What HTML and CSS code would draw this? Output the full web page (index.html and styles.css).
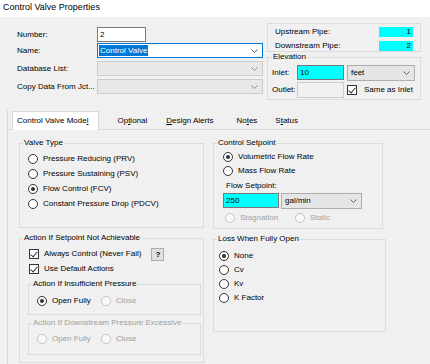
FILE: index.html
```html
<!DOCTYPE html>
<html>
<head>
<meta charset="utf-8">
<link rel="stylesheet" href="styles.css">
</head>
<body>
<div class="titlebar">Control Valve Properties</div>
<div class="top">
  <div class="form">
    <div class="frow r1"><span class="lbl">Number:</span><div class="tb num">2</div></div>
    <div class="frow r2"><span class="lbl">Name:</span><div class="combo name"><span class="sel">Control Valve</span><svg class="chev" width="7" height="4" viewBox="0 0 7 4"><path d="M0.5 0.5L3.5 3.5L6.5 0.5" fill="none" stroke="#606060"/></svg></div></div>
    <div class="frow r3"><span class="lbl">Database List:</span><div class="combo dis"><span></span><svg class="chev" width="7" height="4" viewBox="0 0 7 4"><path d="M0.5 0.5L3.5 3.5L6.5 0.5" fill="none" stroke="#8a8a8a"/></svg></div></div>
    <div class="frow r3"><span class="lbl">Copy Data From Jct...</span><div class="combo dis"><span></span><svg class="chev" width="7" height="4" viewBox="0 0 7 4"><path d="M0.5 0.5L3.5 3.5L6.5 0.5" fill="none" stroke="#8a8a8a"/></svg></div></div>
  </div>
  <div class="right">
    <div class="pipes">
      <div class="prow"><span>Upstream Pipe:</span><span class="cyv">1</span></div>
      <div class="prow"><span>Downstream Pipe:</span><span class="cyv">2</span></div>
    </div>
    <fieldset class="g elev">
      <legend>Elevation</legend>
      <div class="erow e1"><span class="elbl">Inlet:</span><div class="tb cyan inlet">10</div><div class="combo dd feet"><span>feet</span><svg class="chev" width="7" height="4" viewBox="0 0 7 4"><path d="M0.5 0.5L3.5 3.5L6.5 0.5" fill="none" stroke="#606060"/></svg></div></div>
      <div class="erow e2"><span class="elbl">Outlet:</span><div class="tb distb outlet"></div><span class="cb on"></span><span class="cbl">Same as Inlet</span></div>
    </fieldset>
  </div>
</div>
<div class="tabs">
  <div class="strip">
    <div class="tab act">Control Valve Mode<u>l</u></div>
    <div class="tab t2">Op<u>t</u>ional</div>
    <div class="tab t3"><u>D</u>esign Alerts</div>
    <div class="tab t4">No<u>t</u>es</div>
    <div class="tab t5">S<u>t</u>atus</div>
  </div>
  <div class="panel">
    <div class="col left">
      <fieldset class="g vt">
        <legend>Valve Type</legend>
        <div class="gb vtb">
          <div class="opt"><span class="rb"></span>Pressure Reducing (PRV)</div>
          <div class="opt"><span class="rb"></span>Pressure Sustaining (PSV)</div>
          <div class="opt"><span class="rb on"></span>Flow Control (FCV)</div>
          <div class="opt"><span class="rb"></span>Constant Pressure Drop (PDCV)</div>
        </div>
      </fieldset>
      <fieldset class="g act2">
        <legend>Action If Setpoint Not Achievable</legend>
        <div class="gb actb">
          <div class="opt"><span class="cb on"></span>Always Control (Never Fail)<span class="qbtn">?</span></div>
          <div class="opt"><span class="cb on"></span>Use Default Actions</div>
          <fieldset class="g sub s1">
            <legend>Action If Insufficient Pressure</legend>
            <div class="gb subb">
              <div class="opt"><span class="pair"><span class="rb on"></span>Open Fully</span><span class="pair off"><span class="rb"></span>Close</span></div>
            </div>
          </fieldset>
          <fieldset class="g sub s2">
            <legend class="off">Action If Downstream Pressure Excessive</legend>
            <div class="gb subb">
              <div class="opt"><span class="pair off"><span class="rb"></span>Open Fully</span><span class="pair off"><span class="rb"></span>Close</span></div>
            </div>
          </fieldset>
        </div>
      </fieldset>
    </div>
    <div class="col rightc">
      <fieldset class="g cs">
        <legend>Control Setpoint</legend>
        <div class="gb csb">
          <div class="opt"><span class="rb on"></span>Volumetric Flow Rate</div>
          <div class="opt"><span class="rb"></span>Mass Flow Rate</div>
          <div class="fsl">Flow Setpoint:</div>
          <div class="fsrow"><div class="tb cyan fs">250</div><div class="combo dd gal"><span>gal/min</span><svg class="chev" width="7" height="4" viewBox="0 0 7 4"><path d="M0.5 0.5L3.5 3.5L6.5 0.5" fill="none" stroke="#606060"/></svg></div></div>
          <div class="opt stag"><span class="pair off w1"><span class="rb"></span>Stagnation</span><span class="pair off"><span class="rb"></span>Static</span></div>
        </div>
      </fieldset>
      <fieldset class="g loss">
        <legend>Loss When Fully Open</legend>
        <div class="gb lossb">
          <div class="opt"><span class="rb on"></span>None</div>
          <div class="opt"><span class="rb"></span>Cv</div>
          <div class="opt"><span class="rb"></span>Kv</div>
          <div class="opt"><span class="rb"></span>K Factor</div>
        </div>
      </fieldset>
    </div>
  </div>
</div>
</body>
</html>
```
FILE: styles.css
```css
html, body {
  margin: 0;
  padding: 0;
}
body {
  width: 430px;
  height: 364px;
  overflow: hidden;
  background: #f0f0f0;
  color: #000;
  font-family: "Liberation Sans", Arial, sans-serif;
  font-size: 8px;
  line-height: 10px;
}
.titlebar {
  height: 17px;
  background: #fff;
  padding-left: 3px;
  font-size: 9px;
  line-height: 14px;
  box-sizing: border-box;
}
.top {
  display: flex;
  height: 93px;
}
.form {
  padding: 10px 0 0 17px;
}
.frow {
  display: flex;
  align-items: center;
  height: 15px;
}
.frow.r2 { margin-top: 1px; }
.frow.r3 { margin-top: 3px; }
.lbl {
  width: 80px;
  white-space: nowrap;
}
.tb {
  box-sizing: border-box;
  height: 15px;
  border: 1px solid #7a7a7a;
  background: #fff;
  padding-left: 2px;
  line-height: 13px;
}
.num { width: 49px; }
.combo {
  box-sizing: border-box;
  width: 166px;
  height: 15px;
  display: flex;
  align-items: center;
  justify-content: space-between;
  border: 1px solid #cccccc;
  background: #e8e8e8;
  padding: 0 4px 0 1px;
}
.combo .chev { flex: none; }
.combo.name {
  border-color: #0078d7;
  background: #fff;
}
.sel {
  background: #0078d7;
  color: #fff;
  line-height: 11px;
  padding: 0 1px;
}
.combo.dd {
  background: #e5e5e5;
  border-color: #adadad;
  padding-left: 3px;
}
.right {
  margin-left: 4px;
  padding-top: 6px;
  width: 154px;
}
.pipes {
  box-sizing: border-box;
  height: 29px;
  border: 1px solid #dcdcdc;
  padding: 3px 7px 0 7px;
}
.prow {
  display: flex;
  justify-content: space-between;
  align-items: center;
  height: 10px;
  margin-bottom: 4px;
}
.cyv {
  width: 34px;
  height: 10px;
  background: #00ffff;
  text-align: right;
  padding-right: 2px;
  box-sizing: border-box;
  line-height: 10px;
}
fieldset.g {
  border: 1px solid #dcdcdc;
  margin: 0;
  padding: 0;
  min-width: 0;
  box-sizing: border-box;
}
fieldset.g > legend {
  padding: 0 1px;
  line-height: 10px;
  margin-left: 3px;
}
.elev {
  margin-top: 4px;
  height: 48px;
  padding: 0 0 0 4px !important;
}
.elev > legend { margin-left: 0 !important; }
.erow {
  display: flex;
  align-items: center;
}
.e1 { margin-top: 3px; height: 15px; }
.e2 { margin-top: 2px; height: 16px; }
.elbl { width: 25px; }
.inlet { width: 47px; }
.cyan { background: #00ffff; }
.feet { width: 68px; height: 16px; margin-left: 3px; }
.distb {
  background: #f0f0f0;
  border-color: #cccccc;
}
.outlet { width: 47px; height: 16px; }
.cb {
  flex: none;
  box-sizing: border-box;
  width: 10px;
  height: 10px;
  border: 1px solid #333;
  background: #fff;
  position: relative;
}
.cb.on::after {
  content: "";
  position: absolute;
  left: 2px;
  top: 0px;
  width: 3px;
  height: 6px;
  border: solid #333;
  border-width: 0 1px 1px 0;
  transform: rotate(40deg);
}
.e2 .cb { margin-left: 3px; }
.cbl { margin-left: 2px; }

.tabs {
  margin-left: 7px;
  border-left: 1px solid #d9d9d9;
}
.strip {
  display: flex;
  align-items: flex-end;
  height: 19px;
  padding-left: 4px;
}
.tab {
  height: 15px;
  line-height: 14px;
  white-space: nowrap;
}
.tab.act {
  height: 18px;
  line-height: 17px;
  background: #fff;
  border: 1px solid #d9d9d9;
  border-bottom: none;
  padding: 0 10px 0 4px;
  margin-bottom: -1px;
  position: relative;
  z-index: 1;
}
.t2 { margin-left: 18px; }
.t3 { margin-left: 19px; }
.t4 { margin-left: 23px; }
.t5 { margin-left: 18px; }
.panel {
  border-top: 1px solid #d9d9d9;
  height: 240px;
  padding: 8px 0 0 11px;
  display: flex;
  gap: 9px;
}
.col {
  display: flex;
  flex-direction: column;
  gap: 5px;
}
.left { width: 185px; }
.rightc { width: 173px; }
.vt { height: 90px; }
.vt > legend { margin-left: 4px; }
.gb { display: flex; flex-direction: column; }
.opt {
  display: flex;
  align-items: center;
  height: 14px;
  white-space: nowrap;
}
.rb {
  flex: none;
  box-sizing: border-box;
  width: 10px;
  height: 10px;
  border: 1px solid #333;
  border-radius: 50%;
  background: #fff;
  margin-right: 5px;
  position: relative;
}
.rb.on::after {
  content: "";
  position: absolute;
  left: 2px;
  top: 2px;
  width: 4px;
  height: 4px;
  border-radius: 50%;
  background: #333;
}
.cb { margin-right: 5px; }
.vtb { padding: 4px 0 0 8px; gap: 1px; }
.off { color: #a0a0a0; }
.off .rb { border-color: #c4c4c4; background: #fafafa; }
.pair { display: flex; align-items: center; }
.act2 { height: 130px; }
.act2 > legend { margin-left: 5px; }
.actb { padding: 4px 0 0 9px; gap: 1px; }
.qbtn {
  box-sizing: border-box;
  width: 13px;
  height: 13px;
  margin-left: 10px;
  border: 1px solid #adadad;
  background: #e1e1e1;
  font-weight: bold;
  text-align: center;
  line-height: 11px;
}
.sub {
  width: 173px;
  margin-left: -1px !important;
}
.sub > legend { margin-left: 4px; }
.s1 { margin-top: 2px !important; height: 36px; }
.s2 { margin-top: 2px !important; height: 37px; }
.subb { padding: 5px 0 0 8px; }
.s2 .subb { padding-top: 4px; }
.subb .pair:first-child { width: 64px; }
.cs { width: 170px; height: 91px; }
.csb { padding: 2px 0 0 9px; }
.fsl { margin: 3px 0 0 3px; }
.fsrow { display: flex; margin-top: 2px; }
.fs { width: 56px; }
.gal { width: 81px; height: 16px; margin-left: 2px; }
.stag { margin-top: 2px; padding-left: 2px; }
.w1 { width: 70px; }
.loss { height: 98px; }
.lossb { padding: 5px 0 0 5px; }
```
